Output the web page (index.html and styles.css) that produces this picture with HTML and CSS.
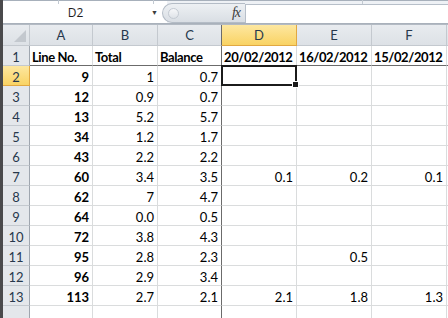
FILE: index.html
```
<!DOCTYPE html>
<html lang="en">
<head>
    <meta charset="UTF-8">
    <title>Sheet1</title>
    <link rel="stylesheet" href="styles.css">
</head>
<body>

<div class="app">
    <div class="edge"></div>
    <div class="main">
        <div class="ribbon-strip">
            <span class="sep s1"></span>
            <span class="sep s2"></span>
            <span class="sep s3"></span>
        </div>
        <div class="formula-bar">
            <div class="name-box">
                <span class="cell-ref">D2</span>
                <span class="drop">&#9660;</span>
            </div>
            <div class="fx-pill">
                <span class="knob"></span>
                <span class="fx">fx</span>
            </div>
            <div class="formula-input"></div>
        </div>
        <div class="band"></div>

        <div class="sheet">
            <!-- column headers -->
            <div class="hd corner">
                <svg width="12" height="12" viewBox="0 0 12 12"><polygon points="12,0 12,12 0,12" fill="#c3c8ce"/></svg>
            </div>
            <div class="hd col">A</div>
            <div class="hd col">B</div>
            <div class="hd col frz">C</div>
            <div class="hd col sel">D</div>
            <div class="hd col">E</div>
            <div class="hd col">F</div>
            <div class="hd col"></div>

            <!-- row 1 -->
            <div class="hd row r1">1</div>
            <div class="c b t r1">Line No.</div>
            <div class="c b t r1">Total</div>
            <div class="c b t r1 frz">Balance</div>
            <div class="c b t r1">20/02/2012</div>
            <div class="c b t r1">16/02/2012</div>
            <div class="c b t r1">15/02/2012</div>
            <div class="c r1"></div>

            <div class="hd row sel">2</div>
            <div class="c b">9</div><div class="c">1</div><div class="c frz">0.7</div>
            <div class="c active"></div><div class="c"></div><div class="c"></div><div class="c"></div>

            <div class="hd row">3</div>
            <div class="c b">12</div><div class="c">0.9</div><div class="c frz">0.7</div>
            <div class="c"></div><div class="c"></div><div class="c"></div><div class="c"></div>

            <div class="hd row">4</div>
            <div class="c b">13</div><div class="c">5.2</div><div class="c frz">5.7</div>
            <div class="c"></div><div class="c"></div><div class="c"></div><div class="c"></div>

            <div class="hd row">5</div>
            <div class="c b">34</div><div class="c">1.2</div><div class="c frz">1.7</div>
            <div class="c"></div><div class="c"></div><div class="c"></div><div class="c"></div>

            <div class="hd row">6</div>
            <div class="c b">43</div><div class="c">2.2</div><div class="c frz">2.2</div>
            <div class="c"></div><div class="c"></div><div class="c"></div><div class="c"></div>

            <div class="hd row">7</div>
            <div class="c b">60</div><div class="c">3.4</div><div class="c frz">3.5</div>
            <div class="c">0.1</div><div class="c">0.2</div><div class="c">0.1</div><div class="c"></div>

            <div class="hd row">8</div>
            <div class="c b">62</div><div class="c">7</div><div class="c frz">4.7</div>
            <div class="c"></div><div class="c"></div><div class="c"></div><div class="c"></div>

            <div class="hd row">9</div>
            <div class="c b">64</div><div class="c">0.0</div><div class="c frz">0.5</div>
            <div class="c"></div><div class="c"></div><div class="c"></div><div class="c"></div>

            <div class="hd row">10</div>
            <div class="c b">72</div><div class="c">3.8</div><div class="c frz">4.3</div>
            <div class="c"></div><div class="c"></div><div class="c"></div><div class="c"></div>

            <div class="hd row">11</div>
            <div class="c b">95</div><div class="c">2.8</div><div class="c frz">2.3</div>
            <div class="c"></div><div class="c">0.5</div><div class="c"></div><div class="c"></div>

            <div class="hd row">12</div>
            <div class="c b">96</div><div class="c">2.9</div><div class="c frz">3.4</div>
            <div class="c"></div><div class="c"></div><div class="c"></div><div class="c"></div>

            <div class="hd row">13</div>
            <div class="c b">113</div><div class="c">2.7</div><div class="c frz">2.1</div>
            <div class="c">2.1</div><div class="c">1.8</div><div class="c">1.3</div><div class="c"></div>

            <!-- row 14, only its top edge is visible -->
            <div class="hd row"></div>
            <div class="c"></div><div class="c"></div><div class="c frz"></div>
            <div class="c"></div><div class="c"></div><div class="c"></div><div class="c"></div>
        </div>
    </div>
</div>

</body>
</html>
```

FILE: styles.css
```
body {
    margin: 0;
    width: 448px;
    height: 318px;
    overflow: hidden;
    background-color: #ffffff;
    font-family: Lato, "Liberation Sans", sans-serif;
}
.app {
    display: flex;
    height: 318px;
}
.edge {
    width: 3px;
    flex: none;
    background-color: #4a4a4c;
}
.main {
    flex: 1;
    min-width: 0;
    display: flex;
    flex-direction: column;
}

/* bottom of the ribbon */
.ribbon-strip {
    position: relative;
    height: 4px;
    background-color: #e3e8ee;
    border-bottom: 1px solid #a7b0bb;
}
.ribbon-strip .sep {
    position: absolute;
    top: 0;
    width: 1px;
    height: 4px;
    background-color: #c2c9d1;
}
.ribbon-strip .s1 { left: 55px; }
.ribbon-strip .s2 { left: 150px; }
.ribbon-strip .s3 { left: 359px; }

/* formula bar */
.formula-bar {
    display: flex;
    height: 24px;
    background-color: #eef1f5;
    border-bottom: 1px solid #a9b1bb;
}
.name-box {
    width: 164px;
    background-color: #ffffff;
    display: flex;
    align-items: center;
}
.cell-ref {
    width: 145px;
    text-align: center;
    font-family: "Open Sans", sans-serif;
    font-size: 12px;
    color: #1e1e1e;
}
.drop {
    font-size: 7px;
    color: #3c3c3c;
    margin-left: 3px;
}
.fx-pill {
    width: 83px;
    height: 20px;
    margin-top: 2px;
    margin-left: -5px;
    box-sizing: border-box;
    border: 1px solid #b4bcc6;
    border-right: none;
    border-radius: 11px 0 0 11px;
    background: linear-gradient(#edf0f3, #d9dee4);
    display: flex;
    align-items: center;
    justify-content: space-between;
    padding-left: 5px;
    padding-right: 5px;
}
.knob {
    width: 9px;
    height: 9px;
    border-radius: 50%;
    background: linear-gradient(#f6f7f9, #dfe3e8);
    border: 1px solid #c4cad2;
}
.fx {
    font-family: "Liberation Serif", serif;
    font-style: italic;
    font-size: 14px;
    color: #3b3b3b;
    letter-spacing: -1px;
}
.formula-input {
    flex: 1;
    margin-top: 3px;
    background-color: #ffffff;
    border-top: 1px solid #b7bfc9;
    border-left: 1px solid #b7bfc9;
}
.band {
    height: 2px;
    background-color: #dfe4ea;
    border-bottom: 1px solid #b3bac3;
}

/* grid */
.sheet {
    display: grid;
    grid-template-columns: 27px 63px 65px 64px 75px 75px 75px 1fr;
    grid-template-rows: 21px;
    grid-auto-rows: 20px;
    font-size: 13px;
    color: #000000;
}
.hd {
    box-sizing: border-box;
    background: linear-gradient(#e8ebef, #dde1e6);
    border-right: 1px solid #c4c9cf;
    border-bottom: 1px solid #c4c9cf;
    color: #27384c;
    font-size: 13px;
    display: flex;
    align-items: center;
    justify-content: center;
}
.hd.row {
    background: #e4e7eb;
    border-right-color: #9fa6af;
    padding-top: 2px;
}
.hd.corner {
    align-items: flex-end;
    justify-content: flex-end;
    padding: 0 3px 3px 0;
}
.hd.frz {
    border-right-color: #6b6b6b;
}
.hd.sel {
    background: linear-gradient(#fde7a0, #f9d364);
    border-bottom-color: #e1a842;
    border-right-color: #e1a842;
}
.c {
    box-sizing: border-box;
    border-right: 1px solid #dadcdd;
    border-bottom: 1px solid #dadcdd;
    padding: 3px 3px 0 3px;
    line-height: 17px;
    text-align: right;
    white-space: nowrap;
    overflow: hidden;
}
.c.b {
    font-weight: bold;
}
.c.t {
    text-align: left;
    letter-spacing: -0.4px;
    padding-left: 2px;
}
.c.r1 {
    border-bottom-color: #6b6b6b;
}
.c.frz {
    border-right-color: #6b6b6b;
}
.c.active {
    position: relative;
    overflow: visible;
}
.c.active::after {
    content: "";
    position: absolute;
    left: -1px;
    top: -1px;
    right: -1px;
    bottom: -1px;
    border: 2px solid #1b1b1b;
}
.c.active::before {
    content: "";
    position: absolute;
    right: -3px;
    bottom: -3px;
    width: 5px;
    height: 5px;
    background-color: #1b1b1b;
    border: 1px solid #ffffff;
    z-index: 1;
}
```
